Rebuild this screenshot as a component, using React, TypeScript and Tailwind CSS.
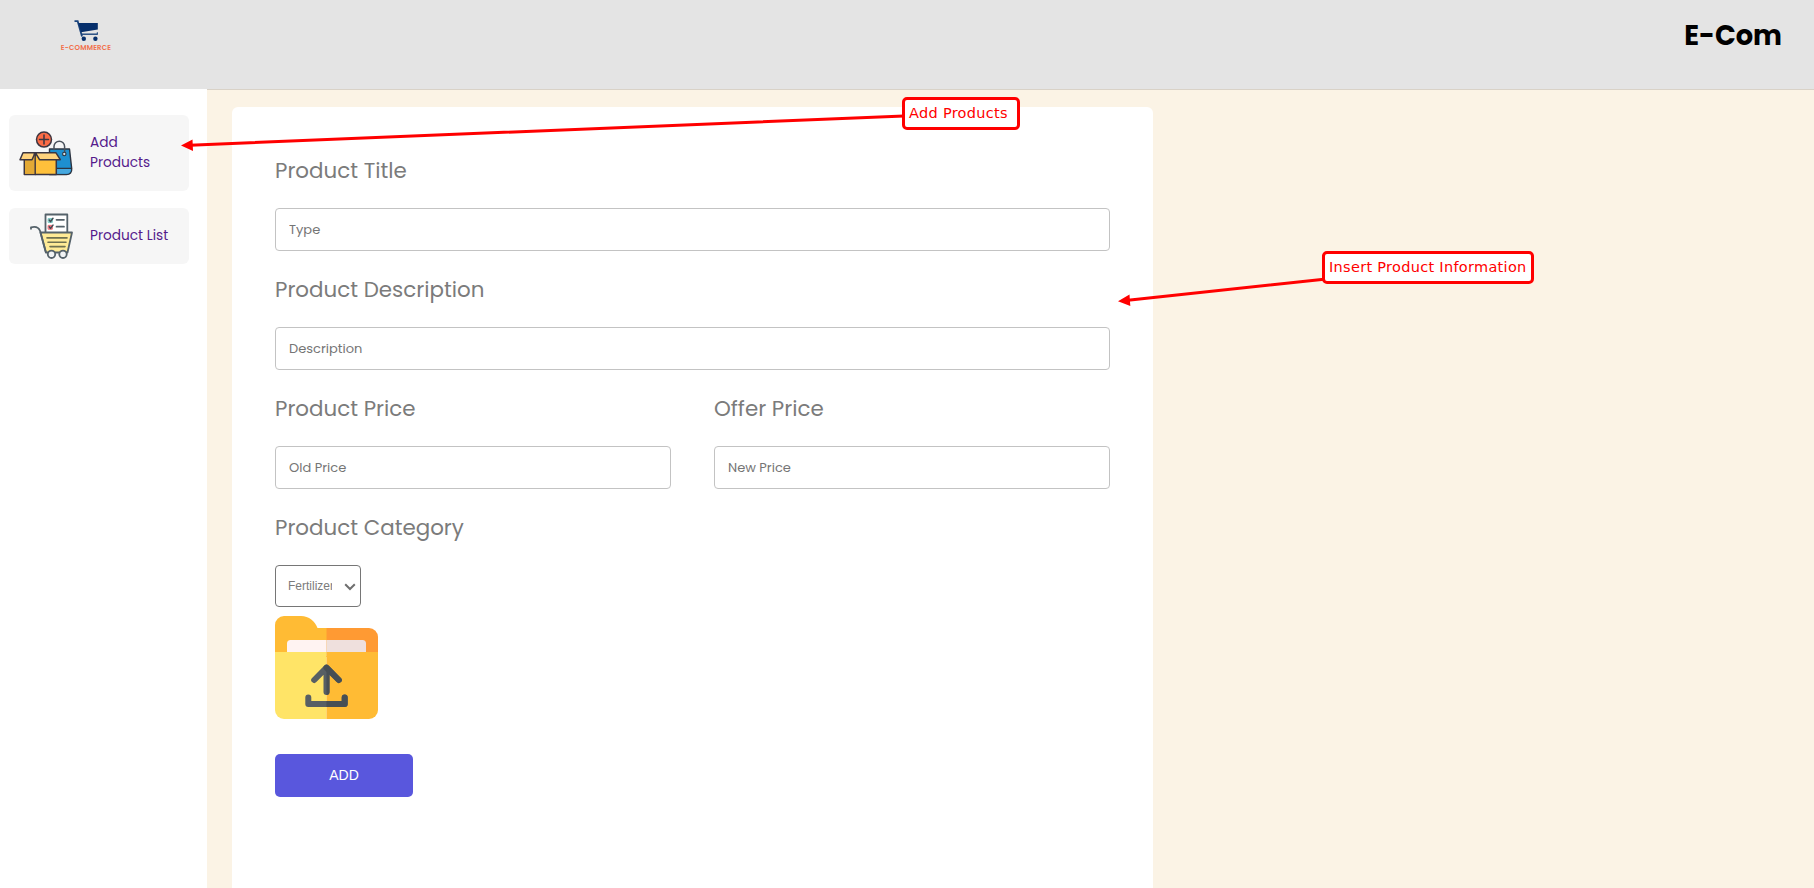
import React from "react";

function BrandLogo() {
  return (
    <div className="flex w-[52px] flex-col items-center pt-px">
      <svg width="26" height="22" viewBox="0 0 26 22" className="block">
        <path d="M1.5 1.2h3.2l4.3 15.2" fill="none" stroke="#1b447c" strokeWidth="1.8" />
        <path d="M5.3 3H24.8V9.6L8 12.3z" fill="#062f6b" />
        <path d="M8 14.2h16.8" stroke="#1b447c" strokeWidth="1.4" fill="none" />
        <path d="M24.3 12.2v2" stroke="#1b447c" strokeWidth="1" />
        <circle cx="10.8" cy="18.8" r="2.2" fill="#062f6b" />
        <circle cx="22.4" cy="18.8" r="2.2" fill="#062f6b" />
      </svg>
      <span className="mt-[2px] whitespace-nowrap text-[7px] font-semibold leading-[8px] tracking-[0.2px] text-[#f2704b]">
        E-COMMERCE
      </span>
    </div>
  );
}

function AddProductsIcon() {
  return (
    <svg width="54" height="46" viewBox="0 0 54 46" className="block" strokeLinejoin="round" strokeLinecap="round">
      <path d="M30.500 19H50.500L52.700 38.500c.3 4-1.700 6-5.200 6H30.500z" fill="#1e8fcf" stroke="#2d3440" strokeWidth="1.400" />
      <path d="M38 38.800h14c-.3 3.500-1.800 5-4.500 5H38z" fill="#46a8df" />
      <path d="M38 38.400h14.500" stroke="#2d3440" strokeWidth="1.200" />
      <path d="M35 19.500V16.500a5.300 5.300 0 0 1 10.600 0V22" fill="none" stroke="#4a525c" strokeWidth="1.500" />
      <circle cx="45.300" cy="24" r="1.700" fill="#d7e6ee" stroke="#2d3440" strokeWidth="1.100" />
      <path d="M5.300 24h32V44.500h-32z" fill="#fec03b" stroke="#3b3540" strokeWidth="1.500" />
      <path d="M6 24.700h10v19h-10z" fill="#e3a935" />
      <path d="M16.200 23v21.500" stroke="#3b3540" strokeWidth="1.400" />
      <path d="M4 22.800h12.200L13 29.700H1z" fill="#ffd27c" stroke="#3b3540" strokeWidth="1.500" />
      <path d="M16.500 22.800H37L41.300 29.700H20.500z" fill="#ffd27c" stroke="#3b3540" strokeWidth="1.500" />
      <path d="M14.700 22.200h3.200v2.600l-1.600 1.500-1.600-1.500z" fill="#3b3540" />
      <circle cx="25" cy="9.600" r="7.500" fill="#fb6b45" stroke="#3b3540" strokeWidth="1.500" />
      <path d="M25 5.100v9M20.500 9.600h9" stroke="#3b3540" strokeWidth="1.500" fill="none" />
    </svg>
  );
}

function ProductListIcon() {
  return (
    <svg width="44" height="47" viewBox="0 0 44 47" className="block" strokeLinejoin="round" strokeLinecap="round">
      <path d="M15.500 1.500h21.800V20H15.500z" fill="#ffffff" stroke="#55626a" strokeWidth="1.800" />
      <path d="M26.500 6.800h7.500M26.500 13.700h7.500" stroke="#55626a" strokeWidth="1.700" />
      <path d="M18.500 5.600h3.800v3.800h-3.800z" fill="#7cc9c4" stroke="#7cc9c4" strokeWidth="1" />
      <path d="M18.500 12.400h3.800v3.800h-3.800z" fill="#f0707a" stroke="#f0707a" strokeWidth="1" />
      <path d="M19.200 7l1.300 1.600L23 5.300M19.200 13.800l1.300 1.600 2.500-3.300" stroke="#404c54" strokeWidth="1.500" fill="none" />
      <path d="M10.500 19.500H42L37.500 39.500H16z" fill="#ffeb96" stroke="#55626a" strokeWidth="1.800" />
      <path d="M1 15.800V14.300c4-1 7.500-.5 9 3.500l5.800 21.500" fill="none" stroke="#55626a" strokeWidth="1.800" />
      <path d="M17 24.900h20M18 29.300h18M20 33.600h15" stroke="#6f7150" strokeWidth="1.600" />
      <circle cx="21.500" cy="41.300" r="3.700" fill="#f1f3f4" stroke="#55626a" strokeWidth="1.800" />
      <circle cx="33" cy="41.300" r="3.700" fill="#f1f3f4" stroke="#55626a" strokeWidth="1.800" />
    </svg>
  );
}

function UploadFolderIcon() {
  return (
    <svg width="103" height="103" viewBox="0 0 103 103" className="block">
      <path d="M51 12h43a9 9 0 0 1 9 9v20H51z" fill="#ff9a33" />
      <path d="M9 0H26c8 0 14 5 16.500 12H51.500V41H0V9a9 9 0 0 1 9-9z" fill="#ffbb34" />
      <path d="M15.500 24H51.500V40H12V27.500a3.500 3.500 0 0 1 3.500-3.500z" fill="#fff3f2" />
      <path d="M51.500 24H87.500a3.500 3.500 0 0 1 3.500 3.500V40H51.500z" fill="#efe0dd" />
      <path d="M0 36H51.500V103H9a9 9 0 0 1-9-9z" fill="#ffe467" />
      <path d="M51.500 36H103V94a9 9 0 0 1-9 9H51.500z" fill="#ffbb34" />
      <g fill="none" strokeWidth="6" strokeLinecap="round" strokeLinejoin="round">
        <path d="M51.500 76V52M39.200 64L51.500 51.700 63.800 64M33.300 81.500V88H69.700V81.500" stroke="#575f64" />
        <path d="M63.800 64L51.500 51.700" stroke="#474f54" />
      </g>
      <path d="M51.500 79a3 3 0 0 0 3-3V53.500L51.500 49zM51.500 85V91H69.700a3 3 0 0 0 3-3V81.500a3 3 0 0 0-6 0V85z" fill="#474f54" />
    </svg>
  );
}

const labelClass = "text-[21.4px] leading-[34px] text-[#7b7b7b] whitespace-nowrap";

function Field({ label, placeholder }: { label: string; placeholder: string }) {
  return (
    <div className="mb-[22px] flex-1">
      <p className={labelClass}>{label}</p>
      <input
        className="mt-[20px] block h-[43px] w-full rounded-[4px] border border-[#c3c3c3] bg-white pl-[13px] text-[13px] outline-none placeholder:text-[#757575] placeholder:opacity-100"
        placeholder={placeholder}
      />
    </div>
  );
}

const calloutClass =
  "absolute flex h-[33px] items-center whitespace-nowrap rounded-[5px] border-3 border-[#ff0000] bg-white pl-[4px] pt-px font-['Verdana','DejaVu_Sans',sans-serif] text-[14.5px] tracking-[0.3px] text-[#ff0000]";

export default function App() {
  return (
    <div className="relative flex h-[888px] w-full flex-col overflow-hidden bg-[#fbf3e5] font-['Poppins',sans-serif]">
      <header className="flex h-[89px] shrink-0 items-start justify-between bg-[#e4e4e4] pl-[60px] pr-[32px] pt-[19px]">
        <BrandLogo />
        <h1 className="pt-px text-[27.3px] font-bold leading-[32px] text-black">E-Com</h1>
      </header>

      <div className="flex min-h-0 flex-1">
        <aside className="w-[207px] shrink-0 bg-white pl-[9px] pt-[26px]">
          <nav className="flex w-[180px] flex-col gap-[17px] text-[13.7px] leading-[20px] text-[#551a8b]">
            <a className="flex h-[76px] items-center rounded-[6px] bg-[#f6f6f6] pl-[10px]">
              <AddProductsIcon />
              <span className="ml-[17px] w-[70px]">Add Products</span>
            </a>
            <a className="flex h-[56px] items-center rounded-[6px] bg-[#f6f6f6] pl-[21px]">
              <ProductListIcon />
              <span className="ml-[16px] whitespace-nowrap pb-px">Product List</span>
            </a>
          </nav>
        </aside>

        <main className="flex-1 border-t border-[#d9d2c7] pl-[25px] pt-[17px]">
          <form className="h-[800px] w-[921px] rounded-[6px] bg-white px-[43px] pt-[47px]">
            <Field label="Product Title" placeholder="Type" />
            <Field label="Product Description" placeholder="Description" />
            <div className="flex gap-[43px]">
              <Field label="Product Price" placeholder="Old Price" />
              <Field label="Offer Price" placeholder="New Price" />
            </div>
            <p className={labelClass}>Product Category</p>
            <div className="mt-[20px] flex h-[42px] w-[86px] items-center rounded-[4px] border border-[#767676] pl-[12px]">
              <span className="w-[44px] overflow-hidden whitespace-nowrap font-['Liberation_Sans',sans-serif] text-[12px] leading-[18px] text-[#7b7b7b]">
                Fertilizer
              </span>
              <svg width="12" height="8" viewBox="0 0 12 8" className="ml-[12px] mt-[2px] shrink-0">
                <path d="M1.200 1.200L6 6l4.800-4.800" fill="none" stroke="#6f6f6f" strokeWidth="2" />
              </svg>
            </div>
            <div className="mt-[9px]">
              <UploadFolderIcon />
            </div>
            <button
              type="button"
              className="mt-[35px] block h-[43px] w-[138px] rounded-[5px] bg-[#5957dd] font-['Liberation_Sans',sans-serif] text-[14px] text-white"
            >
              ADD
            </button>
          </form>
        </main>
      </div>

      <svg width="1814" height="888" className="pointer-events-none absolute left-0 top-0">
        <g stroke="#ff0000" strokeWidth="3" fill="#ff0000">
          <path d="M904 116L190 145.200M1324 279.200L1128 300.200" />
          <path d="M181 145.500L192.500 139.500L193 151zM1118 301.300L1129.500 294.500L1130.300 306z" stroke="none" />
        </g>
      </svg>
      <div className={`${calloutClass} left-[902px] top-[97px] w-[118px]`}>Add Products</div>
      <div className={`${calloutClass} left-[1322px] top-[251px] w-[212px]`}>Insert Product Information</div>
    </div>
  );
}
